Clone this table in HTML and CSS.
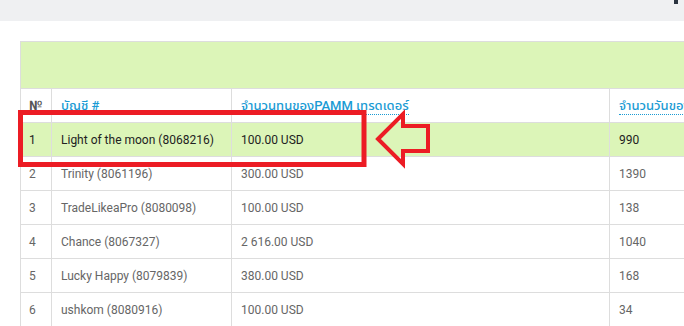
FILE: index.html
```html
<!DOCTYPE html>
<html>
<head>
<meta charset="utf-8">
<link rel="stylesheet" href="styles.css">
</head>
<body>
<div class="topbar"><span class="glyph"></span></div>
<div class="wrap">
<table class="pamm">
  <colgroup>
    <col class="c1"><col class="c2"><col class="c3"><col class="c4">
  </colgroup>
  <thead>
    <tr class="banner"><td colspan="4"></td></tr>
    <tr class="head">
      <th class="num">№</th>
      <th><a class="lnk">บัญชี #</a></th>
      <th><a class="lnk dot">จำนวนทุนของPAMM เทรดเดอร์</a></th>
      <th><a class="lnk dot">จำนวนวันของ</a></th>
    </tr>
  </thead>
  <tbody>
    <tr class="hl"><td>1</td><td>Light of the moon (8068216)</td><td>100.00 USD</td><td>990</td></tr>
    <tr><td>2</td><td>Trinity (8061196)</td><td>300.00 USD</td><td>1390</td></tr>
    <tr><td>3</td><td>TradeLikeaPro (8080098)</td><td>100.00 USD</td><td>138</td></tr>
    <tr><td>4</td><td>Chance (8067327)</td><td>2 616.00 USD</td><td>1040</td></tr>
    <tr><td>5</td><td>Lucky Happy (8079839)</td><td>380.00 USD</td><td>168</td></tr>
    <tr><td>6</td><td>ushkom (8080916)</td><td>100.00 USD</td><td>34</td></tr>
  </tbody>
</table>
</div>
<svg class="annot" width="684" height="326" viewBox="0 0 684 326">
  <rect x="20.5" y="112.5" width="343.5" height="52" fill="none" stroke="#ec1c24" stroke-width="5"/>
  <polygon points="378,139 403,114 403,126 428,126 428,151 403,151 403,164" fill="none" stroke="#ec1c24" stroke-width="4" stroke-linejoin="miter"/>
</svg>
</body>
</html>
```
FILE: styles.css
```css
html, body {
  margin: 0;
  padding: 0;
  background: #ffffff;
  overflow: hidden;
  width: 684px;
  height: 326px;
}
body {
  font-family: Roboto, "Noto Sans Thai", Tahoma, "DejaVu Sans", sans-serif;
  font-size: 13px;
  color: #666;
  position: relative;
}
.topbar {
  height: 21px;
  background: #eff0f2;
  position: relative;
}
.glyph {
  position: absolute;
  left: 674px;
  top: 0;
  width: 4px;
  height: 4px;
  background: #2a3340;
}
.wrap {
  padding: 20px 0 0 20px;
  width: 900px;
}
.pamm {
  border-collapse: collapse;
  width: 860px;
  table-layout: fixed;
}
.c1 { width: 31px; }
.c2 { width: 180px; }
.c3 { width: 378px; }
.c4 { width: 271px; }
.pamm td, .pamm th {
  border: 1px solid #dddddd;
  height: 33px;
  padding: 0 9px;
  text-align: left;
  vertical-align: middle;
  white-space: nowrap;
  overflow: hidden;
}
.pamm tbody td {
  font-size: 12px;
}
.banner td {
  background: #dcf5b8;
  height: 46px;
}
.head th {
  font-weight: 500;
  padding-top: 0;
}
.head th.num {
  color: #555;
  font-weight: 700;
  padding-left: 8px;
}
.lnk {
  color: #1a9bd4;
  text-decoration: none;
}
.dot {
  border-bottom: 1px dotted #1a9bd4;
  padding-bottom: 1px;
}
.pamm tbody td:first-child {
  padding-left: 8px;
}
.hl td {
  background: #dcf5b8;
  color: #222;
}
.annot {
  position: absolute;
  left: 0;
  top: 0;
  pointer-events: none;
}
```
